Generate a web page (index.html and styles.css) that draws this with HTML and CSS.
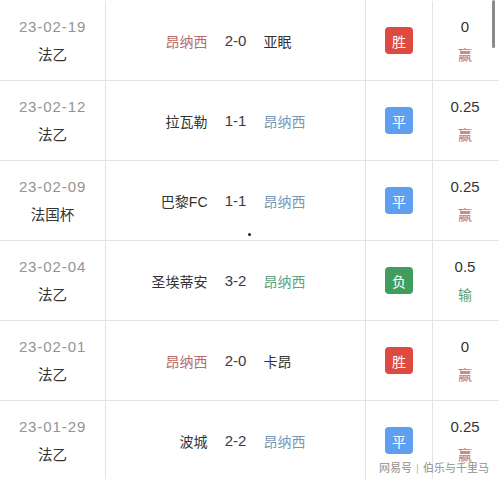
FILE: index.html
```html
<!DOCTYPE html>
<html lang="zh">
<head>
<meta charset="utf-8">
<link rel="stylesheet" href="styles.css">
</head>
<body>
<div class="page">
  <div class="table">
    <div class="row">
      <div class="cell c-date"><span class="date">23-02-19</span><span class="league">法乙</span></div>
      <div class="cell c-match"><span class="home t-red">昂纳西</span><span class="score">2-0</span><span class="away">亚眠</span></div>
      <div class="cell c-res"><span class="badge win">胜</span></div>
      <div class="cell c-odds"><span class="hcp">0</span><span class="out o-win">赢</span></div>
    </div>
    <div class="row">
      <div class="cell c-date"><span class="date">23-02-12</span><span class="league">法乙</span></div>
      <div class="cell c-match"><span class="home">拉瓦勒</span><span class="score">1-1</span><span class="away t-blue">昂纳西</span></div>
      <div class="cell c-res"><span class="badge draw">平</span></div>
      <div class="cell c-odds"><span class="hcp">0.25</span><span class="out o-win">赢</span></div>
    </div>
    <div class="row">
      <div class="cell c-date"><span class="date">23-02-09</span><span class="league">法国杯</span></div>
      <div class="cell c-match"><span class="home">巴黎FC</span><span class="score">1-1</span><span class="away t-blue">昂纳西</span></div>
      <div class="cell c-res"><span class="badge draw">平</span></div>
      <div class="cell c-odds"><span class="hcp">0.25</span><span class="out o-win">赢</span></div>
    </div>
    <div class="row">
      <div class="cell c-date"><span class="date">23-02-04</span><span class="league">法乙</span></div>
      <div class="cell c-match"><span class="home">圣埃蒂安</span><span class="score">3-2</span><span class="away t-green">昂纳西</span></div>
      <div class="cell c-res"><span class="badge lose">负</span></div>
      <div class="cell c-odds"><span class="hcp">0.5</span><span class="out o-lose">输</span></div>
    </div>
    <div class="row">
      <div class="cell c-date"><span class="date">23-02-01</span><span class="league">法乙</span></div>
      <div class="cell c-match"><span class="home t-red">昂纳西</span><span class="score">2-0</span><span class="away">卡昂</span></div>
      <div class="cell c-res"><span class="badge win">胜</span></div>
      <div class="cell c-odds"><span class="hcp">0</span><span class="out o-win">赢</span></div>
    </div>
    <div class="row">
      <div class="cell c-date"><span class="date">23-01-29</span><span class="league">法乙</span></div>
      <div class="cell c-match"><span class="home">波城</span><span class="score">2-2</span><span class="away t-blue">昂纳西</span></div>
      <div class="cell c-res"><span class="badge draw">平</span></div>
      <div class="cell c-odds"><span class="hcp">0.25</span><span class="out o-win">赢</span></div>
    </div>
  </div>
  <div class="scrollbar"></div>
  <div class="dot"></div>
  <div class="watermark">网易号 <span class="sep">|</span> 伯乐与千里马</div>
</div>
</body>
</html>
```

FILE: styles.css
```css
* { box-sizing: border-box; }
html, body { margin: 0; padding: 0; background: #fff; }
body {
  font-family: "Liberation Sans", "Noto Sans CJK SC", sans-serif;
  color: #333;
  overflow: hidden;
}
.page {
  position: relative;
  width: 499px;
  height: 479px;
  overflow: hidden;
}
.table {
  padding-top: 1px;
}
.row {
  display: grid;
  grid-template-columns: 106px 260px 67px 66px;
  height: 80px;
  border-bottom: 1px solid #e4e4e4;
}
.cell {
  border-right: 1px solid #e4e4e4;
  display: flex;
  align-items: center;
}
.cell:last-child { border-right: none; }
.c-date, .c-odds {
  flex-direction: column;
  justify-content: center;
  font-size: 15px;
  line-height: 29px;
}
.date {
  color: #949494;
  letter-spacing: 0.9px;
}
.league { color: #333; font-size: 14.5px; }
.c-match {
  display: grid;
  grid-template-columns: 1fr 56px 1fr;
  font-size: 14px;
  align-items: center;
}
.home { text-align: right; }
.score { text-align: center; font-size: 15px; color: #3a3a3a; }
.away { text-align: left; }
.t-red { color: #b86b67; }
.t-blue { color: #7b96b8; }
.t-green { color: #5ea37d; }
.c-res { justify-content: center; }
.badge {
  width: 28px;
  height: 27px;
  border-radius: 4px;
  color: #fff;
  font-size: 14px;
  display: flex;
  align-items: center;
  justify-content: center;
}
.win { background: #df4a40; }
.draw { background: #5f9ff0; }
.lose { background: #3f9e5f; }
.c-odds { padding-right: 2px; }
.hcp { color: #333; font-size: 15px; }
.out { font-size: 14px; }
.o-win { color: #c4706b; }
.o-lose { color: #58a37e; }
.scrollbar {
  position: absolute;
  left: 492px;
  top: 0;
  width: 3px;
  height: 48px;
  border-radius: 2px;
  background: #8a8a8a;
}
.dot {
  position: absolute;
  left: 248px;
  top: 233px;
  width: 3px;
  height: 3px;
  border-radius: 50%;
  background: #222;
}
.watermark {
  position: absolute;
  left: 379px;
  top: 459px;
  font-size: 11px;
  color: #8f8f8f;
  white-space: nowrap;
  text-shadow: 0 0 2px #fff;
}
.watermark .sep { color: #bbb; margin: 0 1px; }
```
